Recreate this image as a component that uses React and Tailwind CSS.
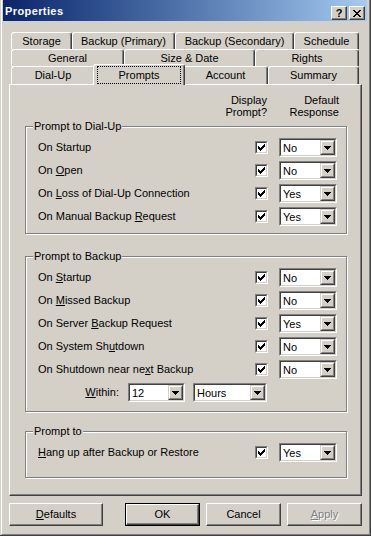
import React from "react";

const Check = () => (
  <div className="w-[13px] h-[13px] shrink-0 border border-t-[#808080] border-l-[#808080] border-r-white border-b-white">
    <div className="w-full h-full bg-white border border-t-[#404040] border-l-[#404040] border-r-[#d4d0c8] border-b-[#d4d0c8] p-[1px]">
      <svg width="7" height="7" viewBox="0 0 7 7" className="block" shapeRendering="crispEdges">
        {[2, 3, 4, 3, 2, 1, 0].map((y, x) => (
          <rect key={x} x={x} y={y} width="1" height="3" fill="#000" />
        ))}
      </svg>
    </div>
  </div>
);

const Arrow = () => (
  <svg width="7" height="4" viewBox="0 0 7 4" className="block" shapeRendering="crispEdges">
    <rect x="0" y="0" width="7" height="1" fill="#000" />
    <rect x="1" y="1" width="5" height="1" fill="#000" />
    <rect x="2" y="2" width="3" height="1" fill="#000" />
    <rect x="3" y="3" width="1" height="1" fill="#000" />
  </svg>
);

const Combo = ({ value, width = "w-[58px]" }) => (
  <div className={`${width} h-[19px] shrink-0 border border-t-[#808080] border-l-[#808080] border-r-white border-b-white`}>
    <div className="h-full flex bg-white border border-t-[#404040] border-l-[#404040] border-r-[#d4d0c8] border-b-[#d4d0c8]">
      <span className="flex-1 pl-[2px] leading-[16px]">{value}</span>
      <div className="w-[15px] h-full bg-[#d4d0c8] border border-t-[#d4d0c8] border-l-[#d4d0c8] border-r-[#404040] border-b-[#404040]">
        <div className="h-full border border-t-white border-l-white border-r-[#808080] border-b-[#808080] flex items-center justify-center">
          <Arrow />
        </div>
      </div>
    </div>
  </div>
);

const Row = ({ children, value }) => (
  <div className="h-[23px] flex items-center pl-[12px] pr-[9px]">
    <span className="flex-1 whitespace-nowrap">{children}</span>
    <Check />
    <div className="ml-[11px]">
      <Combo value={value} />
    </div>
  </div>
);

const GroupBox = ({ title, className, children }) => (
  <div className={`relative w-[322px] border border-[#808080] shadow-[1px_1px_0_#fff,inset_1px_1px_0_#fff] ${className}`}>
    <span className="absolute -top-[7px] left-[7px] bg-[#d4d0c8] px-[1px] leading-[13px]">{title}</span>
    {children}
  </div>
);

const Tab = ({ label, w }) => (
  <div className={`${w} border-l border-t border-r border-white border-r-[#404040] rounded-t-[3px] shadow-[inset_-1px_0_0_#808080] flex items-center justify-center whitespace-nowrap`}>
    {label}
  </div>
);

const Btn = ({ children, w, def, disabled }) => (
  <div className={`${w} h-[23px] ${def ? "border border-black" : ""}`}>
    <div className="h-full border border-t-white border-l-white border-r-[#404040] border-b-[#404040] shadow-[inset_-1px_-1px_0_#808080] flex items-center justify-center">
      <span className={disabled ? "text-[#808080] [text-shadow:1px_1px_0_#fff]" : ""}>{children}</span>
    </div>
  </div>
);

const TitleBtn = ({ children }) => (
  <div className="w-[16px] h-[14px] bg-[#d4d0c8] border border-t-white border-l-white border-r-[#404040] border-b-[#404040] shadow-[inset_-1px_-1px_0_#808080] flex items-center justify-center">
    {children}
  </div>
);

export default function App() {
  return (
    <div className="w-[371px] h-[536px] bg-[#d4d0c8] border-r border-b border-[#404040] pl-[1px] text-[11px] text-black font-['Liberation_Sans',Arial,sans-serif]">
      <div className="h-full flex flex-col border-l border-white border-r border-b border-r-[#808080] border-b-[#808080] pl-[1px] pr-[2px] pb-[2px]">
        {/* title bar */}
        <div className="h-[21px] shrink-0 flex items-start bg-linear-to-r from-[#0a246a] to-[#a6caf0] pl-[2px] pr-[2px]">
          <span className="mt-[5px] leading-[13px] text-white font-bold tracking-[0.4px]">Properties</span>
          <div className="ml-auto mt-[6px] flex gap-[2px]">
            <TitleBtn>
              <span className="font-bold leading-[12px] text-[11px]">?</span>
            </TitleBtn>
            <TitleBtn>
              <svg width="8" height="7" viewBox="0 0 8 7" className="block" shapeRendering="crispEdges">
                <path d="M0 0h2v1H0zM6 0h2v1H6zM1 1h2v1H1zM5 1h2v1H5zM2 2h4v1H2zM3 3h2v1H3zM2 4h4v1H2zM1 5h2v1H1zM5 5h2v1H5zM0 6h2v1H0zM6 6h2v1H6z" fill="#000" />
              </svg>
            </TitleBtn>
          </div>
        </div>

        <div className="flex-1 pl-[6px] pr-[5px] pt-[11px]">
          {/* tabs */}
          <div className="h-[17px] flex ml-[2px]">
            <Tab label="Storage" w="w-[61px]" />
            <Tab label="Backup (Primary)" w="w-[103px]" />
            <Tab label="Backup (Secondary)" w="w-[119px]" />
            <Tab label="Schedule" w="w-[65px]" />
          </div>
          <div className="h-[17px] flex ml-[2px]">
            <Tab label="General" w="w-[113px]" />
            <Tab label="Size & Date" w="w-[131px]" />
            <Tab label="Rights" w="w-[104px]" />
          </div>
          <div className="h-[18px] flex ml-[2px]">
            <Tab label="Dial-Up" w="w-[84px]" />
            <div className="relative z-10 w-[92px] h-[21px] -mx-[2px] -mt-[2px] bg-[#d4d0c8] border-l border-t border-r border-white border-r-[#404040] rounded-t-[3px] shadow-[inset_-1px_0_0_#808080] flex items-center justify-center">
              <span className="w-[84px] h-[18px] border border-dotted border-black flex items-center justify-center">
                Prompts
              </span>
            </div>
            <Tab label="Account" w="w-[85px]" />
            <Tab label="Summary" w="w-[91px]" />
          </div>

          {/* panel */}
          <div className="h-[412px] border-l border-t border-white border-r border-b border-r-[#404040] border-b-[#404040] shadow-[inset_-1px_-1px_0_#808080] pl-[15px] pt-[9px]">
            <div className="w-[322px] flex justify-end pr-[8px] leading-[12px]">
              <div className="w-[80px] text-right">
                Display
                <br />
                Prompt?
              </div>
              <div className="w-[72px] text-right">
                Default
                <br />
                Response
              </div>
            </div>

            <GroupBox title="Prompt to Dial-Up" className="mt-[8px] pt-[9px] pb-[5px]">
              <Row value="No">On Startup</Row>
              <Row value="No">
                On <u>O</u>pen
              </Row>
              <Row value="Yes">
                On <u>L</u>oss of Dial-Up Connection
              </Row>
              <Row value="Yes">
                On Manual Backup <u>R</u>equest
              </Row>
            </GroupBox>

            <GroupBox title="Prompt to Backup" className="mt-[22px] pt-[9px] pb-[7px]">
              <Row value="No">
                On <u>S</u>tartup
              </Row>
              <Row value="No">
                On <u>M</u>issed Backup
              </Row>
              <Row value="Yes">
                On Server <u>B</u>ackup Request
              </Row>
              <Row value="No">
                On System Sh<u>u</u>tdown
              </Row>
              <Row value="No">
                On Shutdown near ne<u>x</u>t Backup
              </Row>
              <div className="h-[23px] flex items-center">
                <span className="w-[93px] text-right">
                  <u>W</u>ithin:
                </span>
                <div className="ml-[9px]">
                  <Combo value="12" width="w-[57px]" />
                </div>
                <div className="ml-[8px]">
                  <Combo value="Hours" width="w-[74px]" />
                </div>
              </div>
            </GroupBox>

            <GroupBox title="Prompt to" className="mt-[19px] pt-[9px] pb-[13px]">
              <Row value="Yes">
                <u>H</u>ang up after Backup or Restore
              </Row>
            </GroupBox>
          </div>

          {/* buttons */}
          <div className="mt-[7px] flex">
            <Btn w="w-[94px]">
              <u>D</u>efaults
            </Btn>
            <div className="ml-[22px]">
              <Btn w="w-[75px]" def>
                OK
              </Btn>
            </div>
            <div className="ml-[6px]">
              <Btn w="w-[75px]">Cancel</Btn>
            </div>
            <div className="ml-[6px]">
              <Btn w="w-[75px]" disabled>
                <u>A</u>pply
              </Btn>
            </div>
          </div>
        </div>
      </div>
    </div>
  );
}
